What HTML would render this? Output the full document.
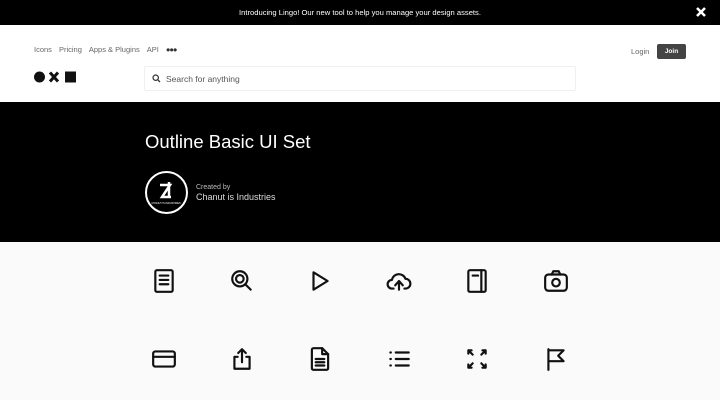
<!DOCTYPE html>
<html><head><meta charset="utf-8"><style>
*{margin:0;padding:0;box-sizing:border-box}
body{width:720px;height:400px;overflow:hidden;background:#fafafa;font-family:"Liberation Sans",sans-serif;position:relative}
.top{position:absolute;left:0;top:0;width:720px;height:25px;background:#000;color:#fff;font-size:7.6px;text-align:center;line-height:25px}
.x{position:absolute;right:13px;top:6px}
.hdr{position:absolute;top:25px;left:0;width:720px;height:77px;background:#fff}
.nav{position:absolute;left:34px;top:20px;font-size:7.5px;color:#666}
.nav span{margin-right:7px}
.search{position:absolute;left:144px;top:41px;width:432px;height:25px;border:1px solid #f0f0f0;border-radius:2px}
.search span{position:absolute;left:21px;top:7px;font-size:8.5px;color:#555}
.login{position:absolute;left:631px;top:22px;font-size:7.5px;color:#666}
.join{position:absolute;left:657px;top:19px;width:29px;height:15px;background:#444;color:#fff;font-size:6.5px;text-align:center;line-height:15px;border-radius:2px;font-weight:bold}
.hero{position:absolute;top:102px;left:0;width:720px;height:140px;background:#000;color:#fff}
.hero h1{position:absolute;left:145px;top:29px;font-size:18.5px;font-weight:normal}
.badge{position:absolute;left:145px;top:69px;width:43px;height:43px;border:2.5px solid #fff;border-radius:50%}
.cb{position:absolute;left:196px;top:82px;font-size:7px;color:#bbb}
.cn{position:absolute;left:196px;top:90px;font-size:9px;color:#ddd}
svg.i{position:absolute;width:26px;height:26px;fill:none;stroke:#111;stroke-width:2;stroke-linecap:round;stroke-linejoin:round}
</style></head><body>
<div class="top">Introducing Lingo! Our new tool to help you manage your design assets.
<svg class="x" width="12" height="12" viewBox="0 0 12 12"><path d="M2 2L10 10M10 2L2 10" stroke="#fff" stroke-width="2.6"/></svg></div>
<div class="hdr">
<div class="nav"><span>Icons</span><span>Pricing</span><span>Apps &amp; Plugins</span><span>API</span><span style="color:#333;font-weight:bold;letter-spacing:-1px">●●●</span></div>
<svg style="position:absolute;left:34px;top:46px" width="43" height="12" viewBox="0 0 43 12"><circle cx="5.5" cy="6" r="5.5" fill="#111"/><path d="M16 1.5L24 10.5M24 1.5L16 10.5" stroke="#111" stroke-width="3"/><rect x="31" y="0.5" width="11" height="11" fill="#111"/></svg>
<div class="search"><svg style="position:absolute;left:7px;top:7px" width="9" height="9" viewBox="0 0 9 9"><circle cx="3.7" cy="3.7" r="2.7" stroke="#333" stroke-width="1.2" fill="none"/><path d="M5.8 5.8L8 8" stroke="#333" stroke-width="1.3"/></svg><span>Search for anything</span></div>
<div class="login">Login</div><div class="join">Join</div>
</div>
<div class="hero"><h1>Outline Basic UI Set</h1>
<div class="badge"><svg width="38" height="38" viewBox="0 0 38 38"><path d="M13 12h10l-8 12h9M22 9v16" stroke="#fff" stroke-width="2.5" fill="none"/><text x="19" y="31" font-size="2.5" fill="#fff" text-anchor="middle">CHANUT IS INDUSTRIES</text></svg></div>
<div class="cb">Created by</div><div class="cn">Chanut is Industries</div></div>

<svg class="i" style="left:151px;top:268px" viewBox="0 0 24 24"><rect x="4" y="2" width="16" height="20" rx="1.5"/><path d="M8 7h8M8 11h8M8 15h8"/></svg>
<svg class="i" style="left:229px;top:268px" viewBox="0 0 24 24"><circle cx="10" cy="10" r="7"/><circle cx="10" cy="10" r="3.5"/><path d="M15 15l5 5"/></svg>
<svg class="i" style="left:307px;top:268px" viewBox="0 0 24 24"><path d="M6 4l13 8-13 8z"/></svg>
<svg class="i" style="left:386px;top:268px" viewBox="0 0 24 24"><path d="M7 19H5.5a4 4 0 0 1 0-8 6.5 6.5 0 0 1 12.5-1 4.5 4.5 0 0 1 0 9H17"/><path d="M12 20v-7M8.5 16l3.5-4 3.5 4"/></svg>
<svg class="i" style="left:464px;top:268px" viewBox="0 0 24 24"><rect x="4" y="2" width="16" height="20" rx="1.5"/><path d="M16 2v20M8 7h5"/></svg>
<svg class="i" style="left:543px;top:268px" viewBox="0 0 24 24"><rect x="2" y="6" width="20" height="15" rx="3"/><path d="M8 6l1.5-3h5L16 6"/><circle cx="12" cy="13.5" r="3.5"/></svg>

<svg class="i" style="left:151px;top:346px" viewBox="0 0 24 24"><rect x="2" y="5" width="20" height="14" rx="2"/><path d="M2 10h20"/></svg>
<svg class="i" style="left:229px;top:346px" viewBox="0 0 24 24"><path d="M8 10H5v11h14V10h-3M12 3v12M8.5 6.5L12 3l3.5 3.5"/></svg>
<svg class="i" style="left:307px;top:346px" viewBox="0 0 24 24"><path d="M14 2H6a1.5 1.5 0 0 0-1.5 1.5v17A1.5 1.5 0 0 0 6 22h12a1.5 1.5 0 0 0 1.5-1.5V7.5z"/><path d="M14 2v5.5h5.5M8 12h8M8 15h8M8 18h8"/></svg>
<svg class="i" style="left:386px;top:346px" viewBox="0 0 24 24"><path d="M4 6h.5M4 12h.5M4 18h.5M9 6h12M9 12h12M9 18h12"/></svg>
<svg class="i" style="left:464px;top:346px" viewBox="0 0 24 24"><path d="M4 4l4 4M4 4v3M4 4h3M20 4l-4 4M20 4v3M20 4h-3M4 20l4-4M4 20v-3M4 20h3M20 20l-4-4M20 20v-3M20 20h-3"/></svg>
<svg class="i" style="left:543px;top:346px" viewBox="0 0 24 24"><path d="M5 22V3M5 4h14l-5 5 5 5H5"/></svg>
</body></html>
